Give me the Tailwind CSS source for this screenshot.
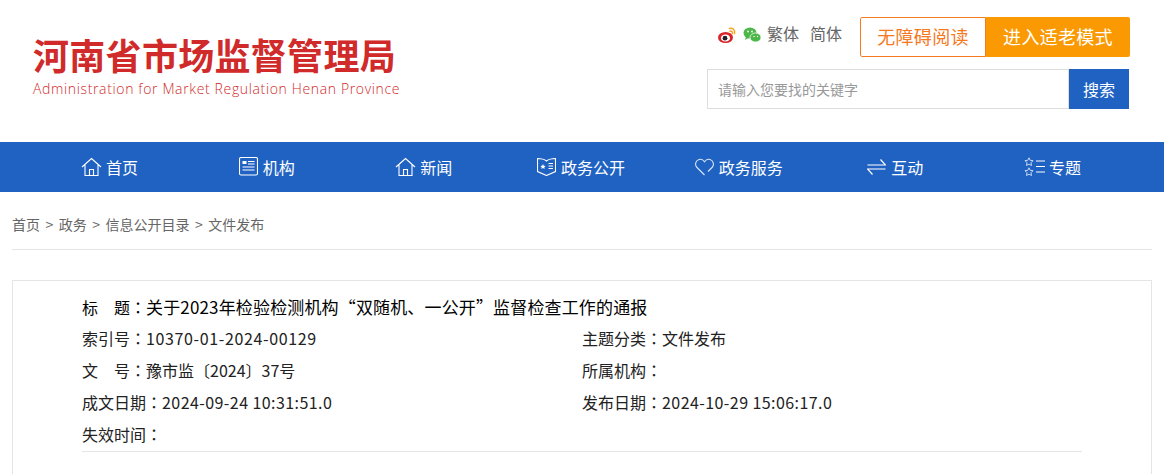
<!DOCTYPE html>
<html lang="zh-CN">
<head>
    <meta charset="UTF-8">
    <title>河南省市场监督管理局</title>
    <script src="https://cdn.jsdelivr.net/npm/@tailwindcss/browser@4"></script>
</head>
<body class="bg-white font-['Noto_Sans_CJK_SC',sans-serif]">
<div class="h-[474px] overflow-hidden">
    <!-- Header -->
    <header class="flex justify-between h-[142px] pl-[33px] pr-[34px]">
        <div class="pt-[32px]">
            <h1 class="text-[36px] leading-[44px] font-bold tracking-[0.3px] text-[#d02a2a] w-[370px] whitespace-nowrap">河南省市场监督管理局</h1>
            <p class="text-[14px] leading-[18px] mt-[4px] tracking-[0.64px] text-[#d02a2a] font-light font-['Open_Sans',sans-serif] whitespace-nowrap">Administration for Market Regulation Henan Province</p>
        </div>
        <div class="pt-[17px] w-[423px]">
            <div class="flex items-center justify-end h-[40px]">
                <svg class="w-[21px] h-[18px] mr-[5px] mb-[4px]" viewBox="0 0 20 18"><ellipse cx="8" cy="11.5" rx="7.5" ry="5.5" fill="#d9252a"/><ellipse cx="8" cy="12" rx="4.6" ry="3.6" fill="#fff"/><circle cx="7.5" cy="12.2" r="2.4" fill="#222"/><path d="M12 2.5c3-1 6 1.500 5 5M12.500 5.200c1.500-.4 2.800.8 2.400 2.400" fill="none" stroke="#f5a623" stroke-width="1.500" stroke-linecap="round"/></svg>
                <svg class="w-[18px] h-[16px] mr-[6px] mb-[4px]" viewBox="0 0 18 16"><ellipse cx="7" cy="6" rx="6.500" ry="5.500" fill="#4cb648"/><path d="M3 10l-1 3 3.500-2z" fill="#4cb648"/><ellipse cx="12.500" cy="10.500" rx="5.500" ry="4.500" fill="#4cb648" stroke="#fff" stroke-width=".8"/><circle cx="5" cy="4.500" r=".9" fill="#fff"/><circle cx="9" cy="4.500" r=".9" fill="#fff"/><circle cx="11" cy="9.500" r=".7" fill="#fff"/><circle cx="14.500" cy="9.500" r=".7" fill="#fff"/></svg>
                <a class="text-[16px] leading-[24px] text-[#666] mb-[8px]">繁体</a>
                <a class="text-[16px] leading-[24px] text-[#666] ml-[11px] mb-[8px]">简体</a>
                <div class="flex ml-[18px] h-[40px] w-[270px] text-[18px] rounded-[2px] overflow-hidden">
                    <a class="flex-1 flex items-center justify-center border border-[#f5791f] rounded-l-[2px] text-[#f5791f] pb-[1px] tracking-[0.3px]">无障碍阅读</a>
                    <a class="w-[144px] flex items-center justify-center bg-[#fa9902] text-white pb-[1px] tracking-[0.3px]">进入适老模式</a>
                </div>
            </div>
            <form class="flex mt-[12px] h-[40px]">
                <input type="text" placeholder="请输入您要找的关键字" class="w-[362px] h-[40px] border border-[#ddd] px-[10px] text-[14px] placeholder:text-[#999]">
                <button type="button" class="w-[60px] h-[40px] bg-[#2062c2] text-white text-[16px]">搜索</button>
            </form>
        </div>
    </header>

    <!-- Nav -->
    <nav class="bg-[#2062c2] h-[50px]">
        <ul class="grid grid-cols-7 ml-[31px] w-[1100px] h-full pb-[1px] text-white text-[16px]">
            <li class="flex items-center justify-center gap-[4px]">
                <svg class="w-[21px] h-[20px]" viewBox="0 0 21 20" fill="none" stroke="#fff" stroke-width="1.100"><path d="M1 10L10.500 1.500 20 10M4 8v10.500h13V8M8.500 18.500v-6h4v6"/></svg>
                <span>首页</span>
            </li>
            <li class="flex items-center justify-center gap-[5px]">
                <svg class="w-[19px] h-[19px]" viewBox="0 0 19 19" fill="none" stroke="#fff" stroke-width="1.100"><rect x=".5" y=".5" width="18" height="17.500" rx="1.500"/><rect x="3.500" y="4" width="4" height="3" fill="#fff" stroke="none"/><path d="M9 4.500h6.500M9 7h6.500M3.500 10h12M3.500 13h12"/></svg>
                <span>机构</span>
            </li>
            <li class="flex items-center justify-center gap-[4px]">
                <svg class="w-[21px] h-[20px]" viewBox="0 0 21 20" fill="none" stroke="#fff" stroke-width="1.100"><path d="M1 10L10.500 1.500 20 10M4 8v10.500h13V8M8.500 18.500v-6h4v6"/></svg>
                <span>新闻</span>
            </li>
            <li class="flex items-center justify-center gap-[5px]">
                <svg class="w-[19px] h-[19px]" viewBox="0 0 19 19" fill="none" stroke="#fff" stroke-width="1.100"><path d="M.5 1.500C4 1.500 7 2 9.500 4 12 2 15 1.500 18.500 1.500v13L9.500 18.500.5 14.500z"/><path d="M11.500 6.500h4.500M11.500 9h4.500M11.500 11.500h4.500"/><path d="M6 7l.8 1.700 1.800.2-1.300 1.300.3 1.800L6 11.100l-1.600.9.300-1.800-1.300-1.300 1.800-.2z" fill="#fff" stroke="none"/></svg>
                <span>政务公开</span>
            </li>
            <li class="flex items-center justify-center gap-[5px] pl-[1px]">
                <svg class="w-[19px] h-[18px]" viewBox="0 0 19 18" fill="none" stroke="#dbe6f7" stroke-width="1.100"><path d="M9.500 17L2 9.500C-.5 7 .5 2.500 4 1.500c2.200-.6 4.200.3 5.500 2.200C10.800 1.800 12.800.900 15 1.500c3.500 1 4.500 5.500 2 8L13 13.500"/></svg>
                <span>政务服务</span>
            </li>
            <li class="flex items-center justify-center gap-[5px]">
                <svg class="w-[19px] h-[18px]" viewBox="0 0 19 18" fill="none" stroke="#fff" stroke-width="1.200"><path d="M.5 7h18L13.500 1.500M18.500 11H.5l5 5.500"/></svg>
                <span>互动</span>
            </li>
            <li class="flex items-center justify-center gap-[4px]">
                <svg class="w-[21px] h-[20px]" viewBox="0 0 21 20" fill="none" stroke="#c9d9f2" stroke-width="1"><path d="M5 .8l1.200 2.500 2.800.4-2 2 .5 2.800L5 7.200 2.500 8.500 3 5.700l-2-2 2.800-.4zM5 10.800l1.200 2.500 2.800.4-2 2 .5 2.800L5 17.200l-2.500 1.300.5-2.800-2-2 2.800-.4z"/><path d="M12 4h9M12 9.500h9M12 15h9" stroke="#fff"/></svg>
                <span>专题</span>
            </li>
        </ul>
    </nav>

    <!-- Breadcrumb -->
    <div class="mx-[12px] h-[58px] border-b border-[#e5e5e5] flex items-center text-[14px] text-[#666] pt-[8px]">
        <a>首页</a><span class="mx-[5.500px]">&gt;</span><a>政务</a><span class="mx-[5.500px]">&gt;</span><a>信息公开目录</a><span class="mx-[5.500px]">&gt;</span><a>文件发布</a>
    </div>

    <!-- Article meta -->
    <section class="mx-[12px] mt-[30px] border border-[#e5e5e5] h-[300px] pl-[69px] pt-[10px] text-[16px] text-[#222]">
        <h2 class="h-[31px] leading-[31px] text-black whitespace-nowrap">标<span class="inline-block w-[16px]"></span>题<span lang="zh-TW" class="font-['Noto_Sans_CJK_TC']">：</span><span class="text-[17px] tracking-[0.15px]">关于2023年检验检测机构“双随机、一公开”监督检查工作的通报</span></h2>
        <div class="border-b border-[#e5e5e5] w-[1000px] pb-[1px]">
            <div class="grid grid-cols-2 leading-[32px]">
                <p>索引号<span lang="zh-TW" class="font-['Noto_Sans_CJK_TC']">：</span><span class="tracking-[0.63px]">10370-01-2024-00129</span></p>
                <p>主题分类<span lang="zh-TW" class="font-['Noto_Sans_CJK_TC']">：</span>文件发布</p>
                <p>文<span class="inline-block w-[16px]"></span>号<span lang="zh-TW" class="font-['Noto_Sans_CJK_TC']">：</span>豫市监〔2024〕37号</p>
                <p>所属机构<span lang="zh-TW" class="font-['Noto_Sans_CJK_TC']">：</span></p>
                <p>成文日期<span lang="zh-TW" class="font-['Noto_Sans_CJK_TC']">：</span><span class="tracking-[0.43px]">2024-09-24 10:31:51.0</span></p>
                <p>发布日期<span lang="zh-TW" class="font-['Noto_Sans_CJK_TC']">：</span><span class="tracking-[0.43px]">2024-10-29 15:06:17.0</span></p>
                <p>失效时间<span lang="zh-TW" class="font-['Noto_Sans_CJK_TC']">：</span></p>
            </div>
        </div>
    </section>
</div>
</body>
</html>
